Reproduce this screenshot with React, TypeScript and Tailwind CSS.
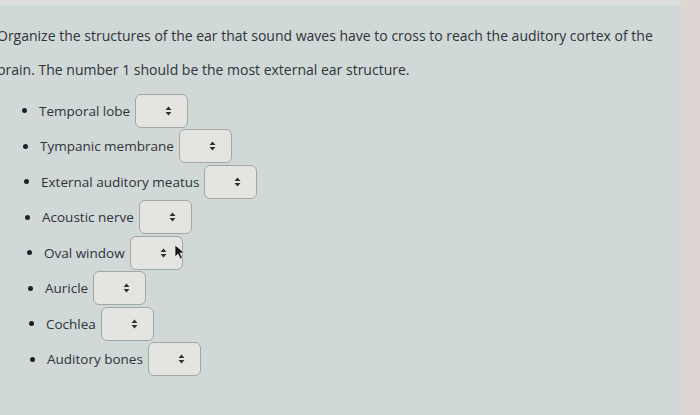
import { FC } from "react";

type Item = { label: string; indent: string };

// each row sits a touch further right than the one above it
const items: Item[] = [
  { label: "Temporal lobe", indent: "pl-[22px]" },
  { label: "Tympanic membrane", indent: "pl-[23px]" },
  { label: "External auditory meatus", indent: "pl-[24px]" },
  { label: "Acoustic nerve", indent: "pl-[25px]" },
  { label: "Oval window", indent: "pl-[27px]" },
  { label: "Auricle", indent: "pl-[28px]" },
  { label: "Cochlea", indent: "pl-[29px]" },
  { label: "Auditory bones", indent: "pl-[30px]" },
];

const SortArrows: FC = () => (
  <svg width="7" height="10" viewBox="0 0 7 10" className="shrink-0">
    <path d="M3.5 0.5 L6.5 4 L0.5 4 Z" fill="#2d3133" />
    <path d="M3.5 9.5 L6.5 6 L0.5 6 Z" fill="#2d3133" />
  </svg>
);

const Pointer: FC = () => (
  <svg
    width="12"
    height="16"
    viewBox="0 0 12 16"
    className="absolute left-[43px] top-[7px]"
  >
    <path
      d="M1 1 L1 13 L4 10 L6.5 15 L8.5 14 L6 9 L10.5 9 Z"
      fill="#111"
      stroke="#e8e8e8"
      strokeWidth="0.8"
    />
  </svg>
);

const Select: FC<{ withPointer?: boolean }> = ({ withPointer }) => (
  <div className="relative flex h-[34px] w-[53px] shrink-0 items-center justify-end rounded-[6px] border border-[#a4a6a5] bg-[#e4e5e1] pr-[15px]">
    <SortArrows />
    {withPointer && <Pointer />}
  </div>
);

const App: FC = () => {
  return (
    <div
      className="flex h-[415px] w-[700px] overflow-hidden bg-[#d0d8d8] text-[#2f3436]"
      style={{ fontFamily: '"Open Sans", "Liberation Sans", sans-serif' }}
    >
      <div className="flex flex-1 flex-col">
        <div className="h-[5px] bg-[#dcdfdc]" />
        <p className="-ml-[3px] pt-[14px] text-[14px] leading-[34px]">
          Organize the structures of the ear that sound waves have to cross to
          reach the auditory cortex of the
          <br />
          brain. The number 1 should be the most external ear structure.
        </p>

        <ul className="mt-[6px] flex flex-col">
          {items.map((item, i) => (
            <li
              key={item.label}
              className={`flex h-[35.5px] items-center ${item.indent}`}
            >
              <span className="h-[5px] w-[5px] shrink-0 rounded-full bg-[#1e2224]" />
              <span className="ml-[12px] mr-[5px] text-[13.5px]">
                {item.label}
              </span>
              <Select withPointer={i === 4} />
            </li>
          ))}
        </ul>
      </div>
      <div className="w-[19px] bg-[#ddd6d2]" />
    </div>
  );
};

export default App;
